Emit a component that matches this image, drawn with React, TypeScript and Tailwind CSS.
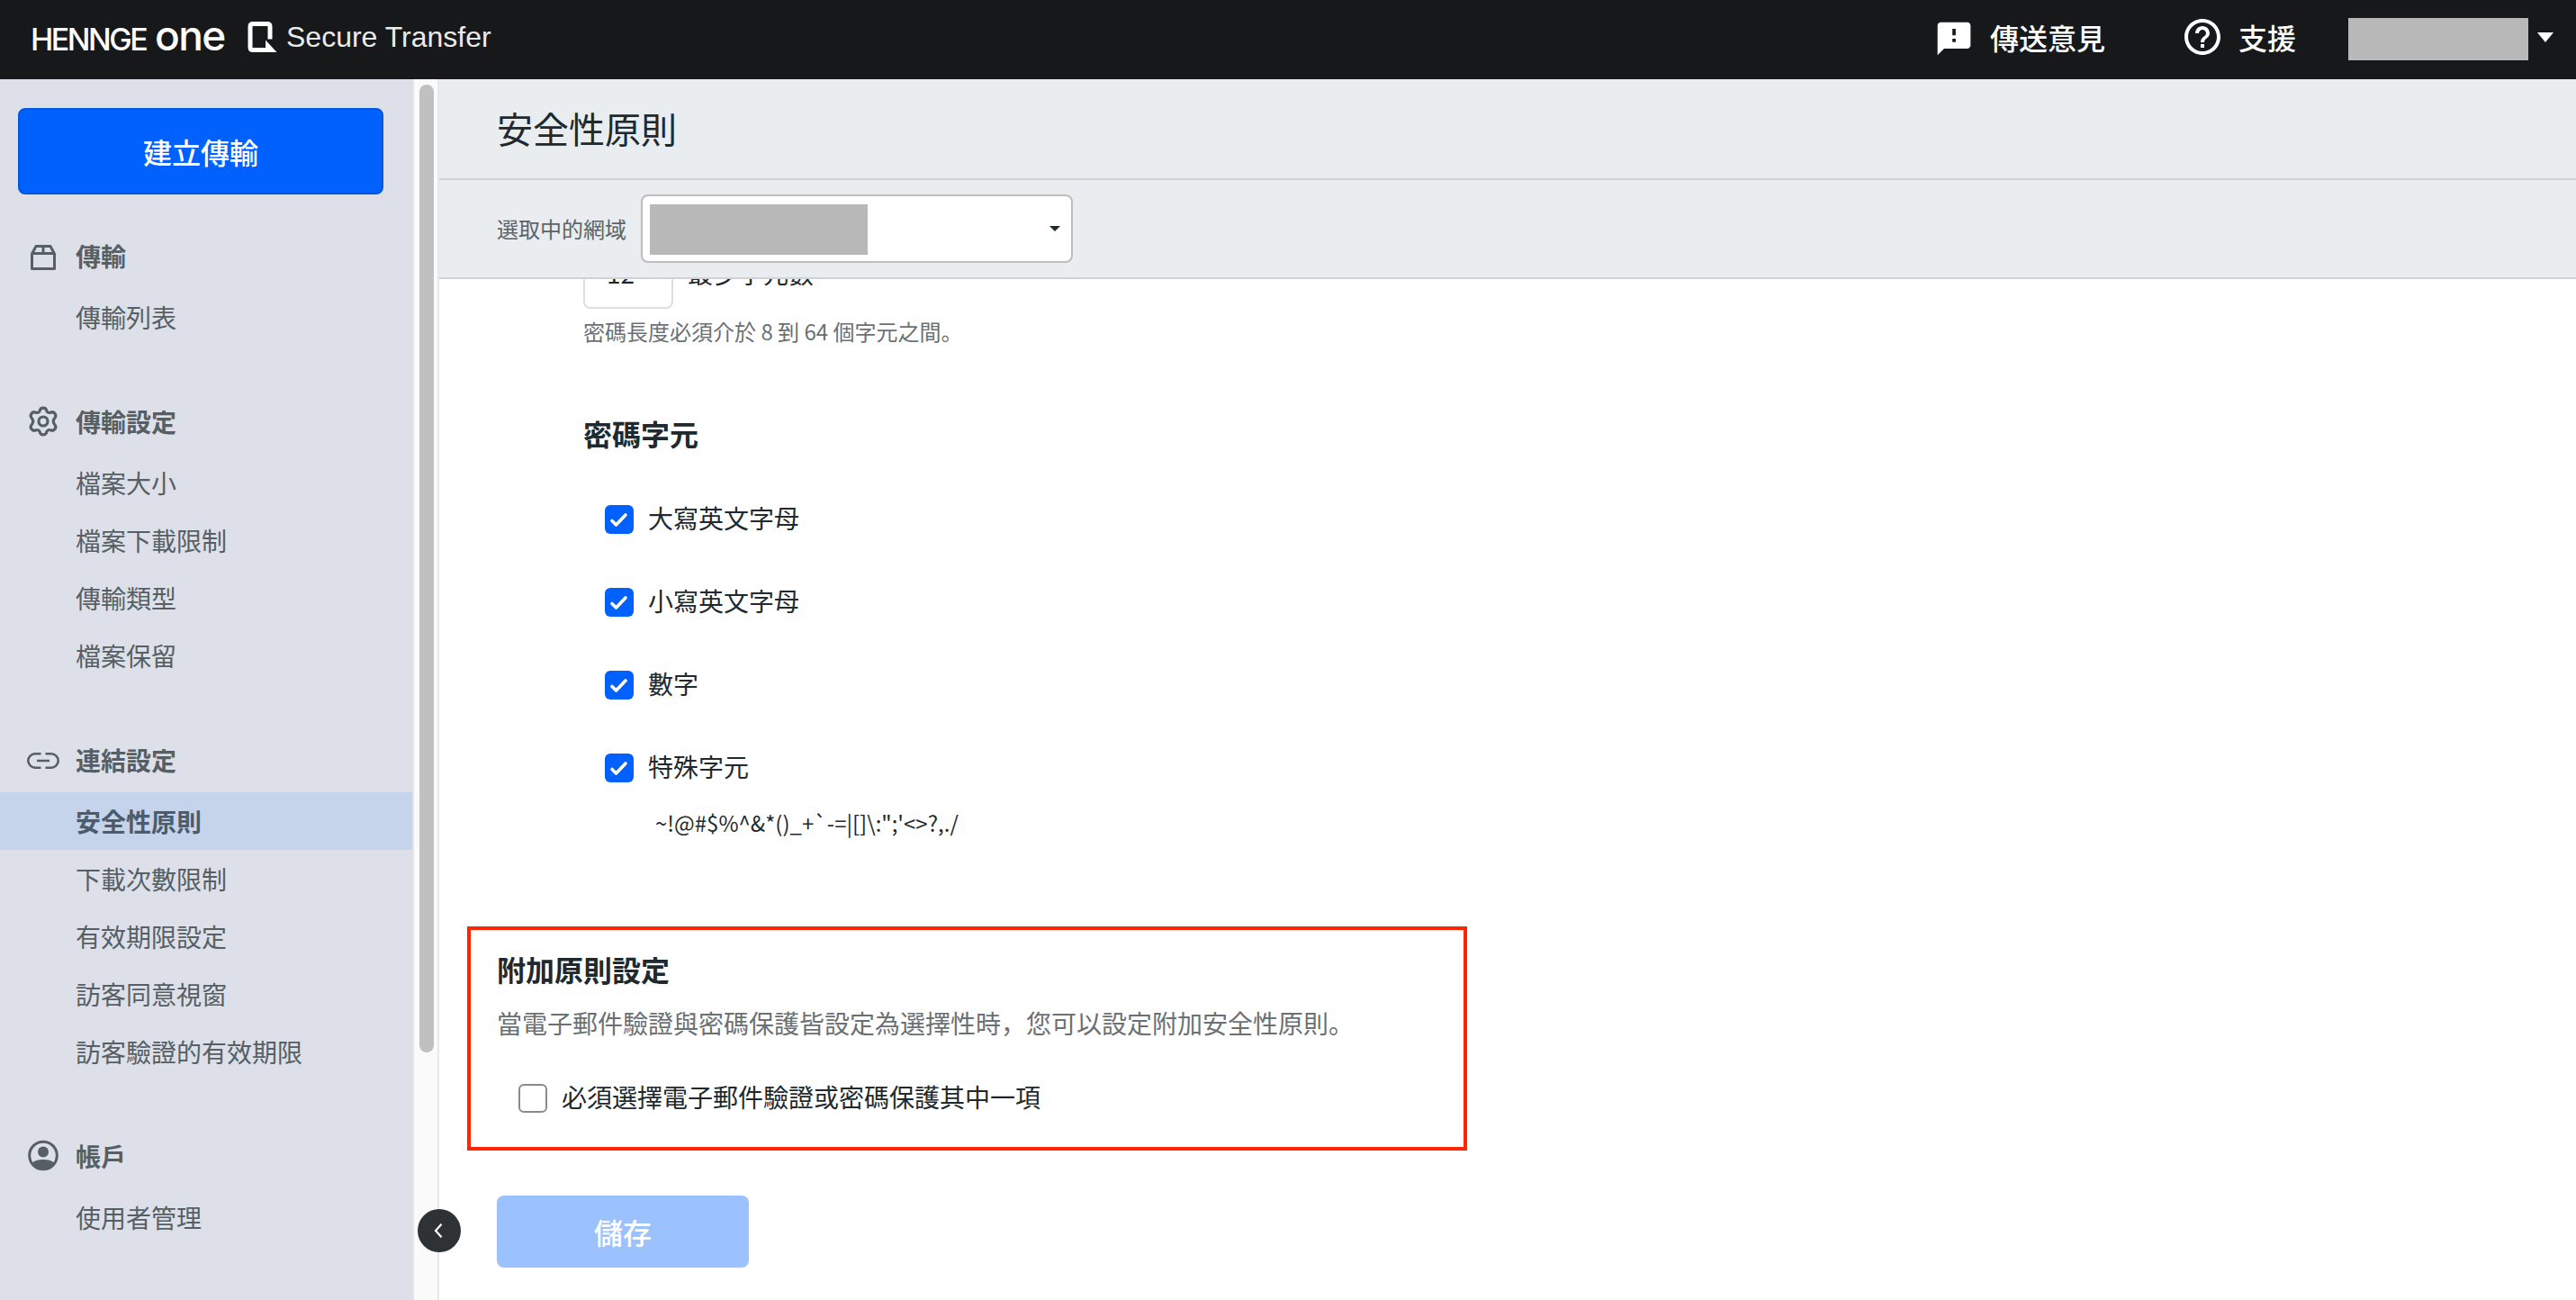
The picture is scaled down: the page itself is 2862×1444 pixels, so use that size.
import React from "react";
import { MdFeedback, MdHelpOutline } from "react-icons/md";

const BoxIcon = () => (
  <svg width="40" height="40" viewBox="0 0 40 40" fill="none" stroke="currentColor" strokeWidth="3" strokeLinejoin="round">
    <path d="M7.500 18v16.500h25V18l-4.500-8.500h-16z" />
    <path d="M7.500 17.500h25M20 9.500v8" />
  </svg>
);

const GearIcon = () => (
  <svg width="40" height="40" viewBox="0 0 40 40" fill="none" stroke="currentColor" strokeWidth="3.200" strokeLinejoin="round">
    <circle cx="20" cy="20" r="5" />
    <path d="M16.200 8.200C17 4 23 4 23.800 8.200C24.300 10 26 11 28 10.200C32.500 8.400 35.500 13.300 32.700 16.500C30.800 18.800 30.800 21.200 32.700 23.500C35.500 26.700 32.500 31.600 28 29.800C26 29 24.300 30 23.800 31.800C23 36 17 36 16.200 31.800C15.700 30 14 29 12 29.800C7.500 31.600 4.500 26.700 7.300 23.500C9.200 21.200 9.200 18.800 7.300 16.500C4.500 13.300 7.500 8.400 12 10.200C14 11 15.700 10 16.200 8.200Z" />
  </svg>
);

const LinkIcon = () => (
  <svg width="40" height="40" viewBox="0 0 40 40" fill="none" stroke="currentColor" strokeWidth="2.600">
    <path d="M17.500 13.300h-6.500a7.700 7.700 0 0 0 0 15.400h6.500M22.500 13.300h6.500a7.700 7.700 0 0 1 0 15.400h-6.500M13 21h14" />
  </svg>
);

const UserIcon = () => (
  <svg width="40" height="40" viewBox="0 0 40 40">
    <circle cx="20" cy="19.500" r="15.300" fill="none" stroke="currentColor" strokeWidth="3" />
    <circle cx="20" cy="15.500" r="6" fill="currentColor" />
    <path d="M7.500 28C12 22.500 28 22.500 32.500 28C29 33.500 25 35.500 20 35.500S11 33.500 7.500 28Z" fill="currentColor" />
  </svg>
);

const groups = [
  { title: "傳輸", icon: <BoxIcon />, items: ["傳輸列表"] },
  { title: "傳輸設定", icon: <GearIcon />, items: ["檔案大小", "檔案下載限制", "傳輸類型", "檔案保留"] },
  {
    title: "連結設定",
    icon: <LinkIcon />,
    items: ["安全性原則", "下載次數限制", "有效期限設定", "訪客同意視窗", "訪客驗證的有效期限"],
  },
  { title: "帳戶", icon: <UserIcon />, items: ["使用者管理"] },
];

const ACTIVE = "安全性原則";

function Header() {
  return (
    <header className="flex h-[88px] shrink-0 items-center bg-[#17181a] text-white">
      <div className="flex h-full items-center pl-[34px]">
        <div className="-mt-1.5 flex w-[240px] items-baseline whitespace-nowrap font-['Inter'] leading-[80px]">
          <span className="w-[138px] text-[34px] font-medium tracking-[-2.5px]">HENNGE</span>
          <span className="text-[46px] font-medium tracking-[-1.6px]">one</span>
        </div>
        <svg width="34" height="36" viewBox="0 0 34 36" className="mt-[-7px]">
          <path d="M26 20.500V6.500Q26 3.500 23 3.500H7Q4 3.500 4 6.500V29.500Q4 32.500 7 32.500H23" fill="none" stroke="#fff" strokeWidth="5" />
          <path d="M21 21.500L33.500 35H21Z" fill="#fff" />
        </svg>
        <span className="-mt-1.5 ml-2.5 font-['Liberation_Sans'] text-[32px] leading-[80px] text-[#ebebeb]">Secure Transfer</span>
      </div>
      <div className="ml-auto flex h-full items-center pr-[25px] text-[32px] font-medium">
        <MdFeedback size={44} className="-mt-[3px]" />
        <span className="-mt-[7px] ml-[18px] leading-[80px]">傳送意見</span>
        <MdHelpOutline size={48} className="ml-[84px] mt-[-6px]" />
        <span className="-mt-[7px] ml-4 leading-[80px]">支援</span>
        <div className="ml-[58px] mt-[-1px] h-[47px] w-[200px] bg-[#b8b8b8]" />
        <svg width="18" height="11" viewBox="0 0 18 11" className="ml-2.5 mt-[-5px]">
          <path d="M0 0H18L9 11Z" fill="#fff" />
        </svg>
      </div>
    </header>
  );
}

function Sidebar() {
  return (
    <aside className="relative flex w-[488px] shrink-0 border-r-2 border-[#e8e8e8] bg-[#fafafa]">
      <nav className="w-[460px] border-r-2 border-[#e2e3e5] bg-[#dde0e8] pt-8 text-[28px] text-[#566064]">
        <button className="ml-5 flex h-24 w-[406px] items-center justify-center rounded-lg border-2 border-[#0056e0] bg-[#0061ff] text-[32px] font-medium text-white">
          建立傳輸
        </button>
        <div className="mt-8 flex flex-col gap-12">
          {groups.map((g) => (
            <section key={g.title}>
              <h2 className="flex h-[72px] items-center gap-4 pl-7 font-bold">
                {g.icon}
                {g.title}
              </h2>
              <ul>
                {g.items.map((item) => (
                  <li
                    key={item}
                    className={
                      item === ACTIVE
                        ? "flex h-16 items-center bg-[#c5d3eb] pl-[84px] font-bold text-[#4c5c6c]"
                        : "flex h-16 items-center pl-[84px]"
                    }
                  >
                    {item}
                  </li>
                ))}
              </ul>
            </section>
          ))}
        </div>
      </nav>
      <div className="ml-1.5 mt-1.5 h-[1075px] w-4 rounded-full bg-[#c0c0c0]" />
      <button className="absolute left-[464px] top-[1255px] z-10 flex size-12 items-center justify-center rounded-full bg-[#2e3235]">
        <svg width="10" height="16" viewBox="0 0 10 16" className="-ml-0.5" fill="none" stroke="#fff" strokeWidth="2.200">
          <path d="M8.500 0.800L2 8L8.500 15.200" />
        </svg>
      </button>
    </aside>
  );
}

function Checkbox({ checked = false }: { checked?: boolean }) {
  if (!checked) return <span className="size-8 rounded-md border-2 border-[#8a8a8a] bg-white" />;
  return (
    <span className="flex size-8 items-center justify-center rounded-md bg-[#0061ff]">
      <svg width="32" height="32" viewBox="0 0 32 32" fill="none" stroke="#fff" strokeWidth="3.600" strokeLinecap="round" strokeLinejoin="round">
        <path d="M8 17.500L12.500 22L23 11" />
      </svg>
    </span>
  );
}

function Main() {
  return (
    <main className="flex min-w-0 flex-1 flex-col bg-white text-[28px] text-[#20292d]">
      <div className="flex h-28 shrink-0 items-center border-b-2 border-[#ced3d7] bg-[#e9edf0] pl-16">
        <h1 className="-mt-[3px] text-[40px]">安全性原則</h1>
      </div>
      <div className="flex h-[110px] shrink-0 items-center border-b-2 border-[#ced3d7] bg-[#e9edf0] pl-16">
        <span className="w-40 text-2xl text-[#5c6468]">選取中的網域</span>
        <div className="flex h-[76px] w-[480px] items-center justify-between rounded-lg border-2 border-[#bdbdbd] bg-white pl-2 pr-3">
          <div className="mt-0.5 h-14 w-[242px] bg-[#b8b8b8]" />
          <svg width="12" height="6" viewBox="0 0 12 6">
            <path d="M0 0H12L6 6Z" fill="#20292d" />
          </svg>
        </div>
      </div>
      <div className="min-h-0 flex-1 overflow-hidden">
        <div className="-mt-[47px] pl-40">
          <div className="flex h-20 items-center">
            <div className="flex h-20 w-[100px] items-center rounded-lg border-2 border-[#dedede] pl-6">12</div>
            <span className="ml-4">最少字元數</span>
          </div>
          <p className="mt-[7px] text-2xl leading-9 text-[#6a7174]">密碼長度必須介於 8 到 64 個字元之間。</p>
          <h2 className="mt-[71px] text-[32px] font-bold leading-[48px]">密碼字元</h2>
          <div className="mt-[26px] pl-6">
            {["大寫英文字母", "小寫英文字母", "數字", "特殊字元"].map((t) => (
              <label key={t} className="flex h-[92px] items-center gap-4">
                <Checkbox checked />
                <span className="-mt-1">{t}</span>
              </label>
            ))}
            <p className="-mt-[3px] pl-14 text-2xl leading-9">{"~!@#$%^&*()_+`-=|[]\\:\";'<>?,./"}</p>
          </div>
        </div>
        <section className="ml-[31px] mt-[97px] h-[249px] w-[1111px] border-4 border-[#ff2600] pl-[29px] pt-[19px]">
          <h2 className="text-[32px] font-bold leading-[48px]">附加原則設定</h2>
          <p className="mt-3.5 leading-[44px] text-[#6a7174]">當電子郵件驗證與密碼保護皆設定為選擇性時，您可以設定附加安全性原則。</p>
          <label className="mt-[37px] flex h-[50px] items-center gap-4 pl-6">
            <Checkbox />
            <span className="-mt-1">必須選擇電子郵件驗證或密碼保護其中一項</span>
          </label>
        </section>
        <button className="ml-16 mt-[50px] flex h-20 w-[280px] items-center justify-center rounded-lg bg-[#9bc2ff] text-[32px] font-medium text-white">
          儲存
        </button>
      </div>
    </main>
  );
}

export default function App() {
  return (
    <div className="flex h-[1444px] w-[2862px] flex-col overflow-hidden font-['Noto_Sans_CJK_JP','Noto_Sans_CJK_TC',sans-serif]">
      <Header />
      <div className="flex min-h-0 flex-1">
        <Sidebar />
        <Main />
      </div>
    </div>
  );
}
